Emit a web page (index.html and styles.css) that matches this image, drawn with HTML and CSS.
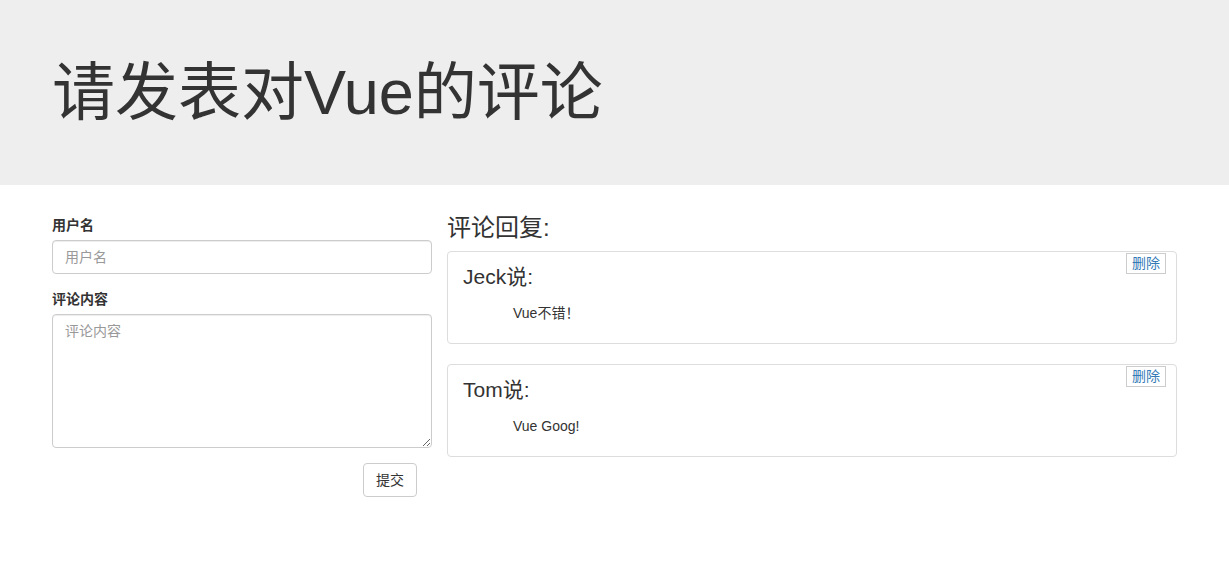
FILE: index.html
```html
<!DOCTYPE html>
<html lang="zh-CN">
<head>
<meta charset="utf-8">
<title>评论</title>
<link rel="stylesheet" href="styles.css">
</head>
<body>
<div class="jumbotron">
  <h1 class="title">请发表对Vue的评论</h1>
</div>
<div class="main">
  <form class="side">
    <div class="form-group">
      <label class="label">用户名</label>
      <input class="input" type="text" placeholder="用户名">
    </div>
    <div class="form-group">
      <label class="label">评论内容</label>
      <textarea class="input textarea" rows="6" placeholder="评论内容"></textarea>
    </div>
    <div class="actions">
      <button type="button" class="btn">提交</button>
    </div>
  </form>
  <div class="list">
    <h3 class="list-title">评论回复:</h3>
    <div class="card">
      <button type="button" class="del">删除</button>
      <h4 class="who">Jeck说:</h4>
      <p class="text">Vue不错！</p>
    </div>
    <div class="card">
      <button type="button" class="del">删除</button>
      <h4 class="who">Tom说:</h4>
      <p class="text">Vue Goog!</p>
    </div>
  </div>
</div>
</body>
</html>
```
FILE: styles.css
```css
* { box-sizing: border-box; }
html, body {
  margin: 0;
  padding: 0;
  background: #fff;
  color: #333;
  font-family: "Liberation Sans", "Noto Sans CJK SC", sans-serif;
  font-size: 14px;
  line-height: 20px;
}
.jumbotron {
  background: #eee;
  height: 185px;
  padding: 58px 52px 0;
  margin-bottom: 30px;
}
.title {
  margin: 0;
  font-size: 63px;
  line-height: 69px;
  font-weight: 400;
}
.main {
  display: flex;
  gap: 15px;
  padding-left: 52px;
}
.side {
  width: 380px;
  margin: 0;
}
.form-group {
  margin-bottom: 15px;
}
.label {
  display: block;
  font-weight: 700;
  margin-bottom: 5px;
}
.input {
  display: block;
  width: 100%;
  height: 34px;
  padding: 6px 12px;
  font: inherit;
  color: #555;
  background: #fff;
  border: 1px solid #ccc;
  border-radius: 4px;
  box-shadow: inset 0 1px 1px rgba(0,0,0,.075);
  outline: none;
}
.input::placeholder { color: #999; }
.textarea {
  height: 134px;
  resize: vertical;
}
.actions {
  display: flex;
  justify-content: flex-end;
  padding-right: 15px;
}
.btn {
  font: inherit;
  color: #333;
  background: #fff;
  border: 1px solid #ccc;
  border-radius: 4px;
  padding: 6px 12px;
  line-height: 20px;
  height: 34px;
}
.list {
  width: 730px;
}
.list-title {
  margin: 0 0 10px;
  font-size: 24px;
  line-height: 26px;
  font-weight: 400;
}
.card {
  position: relative;
  border: 1px solid #ddd;
  border-radius: 4px;
  padding: 13px 15px 20px;
  margin-bottom: 20px;
}
.del {
  position: absolute;
  top: 1px;
  right: 10px;
  font: inherit;
  font-size: 14px;
  line-height: 19px;
  color: #337ab7;
  background: #fff;
  border: 1px solid #ccc;
  border-radius: 0;
  padding: 0 5px;
}
.who {
  margin: 0 0 14px;
  font-size: 21px;
  line-height: 24px;
  font-weight: 400;
}
.text {
  margin: 0;
  padding-left: 50px;
}
```
